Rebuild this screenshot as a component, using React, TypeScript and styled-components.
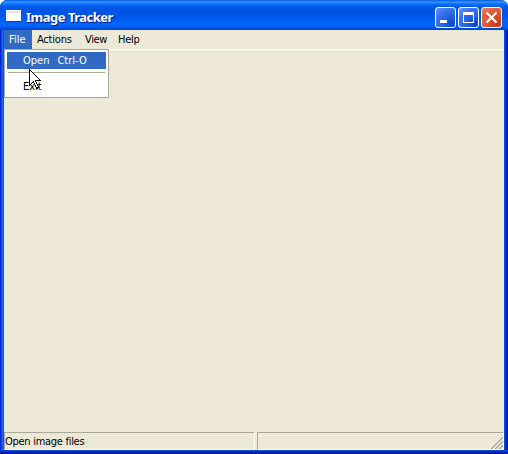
import React from 'react';
import styled, { createGlobalStyle } from 'styled-components';

const Global = createGlobalStyle`
  * { box-sizing: border-box; }
  body { margin: 0; background: #fff; overflow: hidden; }
`;

const Window = styled.div`
  width: 508px;
  height: 454px;
  display: flex;
  flex-direction: column;
  padding: 0 4px 4px;
  border-radius: 7px 7px 0 0;
  overflow: hidden;
  background:
    linear-gradient(to bottom, #0a46dc 0, #0a3fd0 1px, #0028bd 2px, #00138c 4px) 0 100% / 100% 4px no-repeat,
    linear-gradient(to right, #0019cf 0, #0831d9 1px, #166aee 2px, #0855dd 4px) 0 0 / 4px 100% no-repeat,
    linear-gradient(to left, #00138c 0, #001ea0 1px, #0441d8 3px, #0855dd 4px) 100% 0 / 4px 100% no-repeat,
    #0855dd;
  font: 11px/13px "DejaVu Sans Condensed", "DejaVu Sans", sans-serif;
  color: #000;
`;

const TitleBar = styled.header`
  height: 30px;
  flex: none;
  margin: 0 -4px;
  padding: 4px 6px 0 5px;
  display: flex;
  align-items: center;
  background: linear-gradient(to bottom, #0058e6 0, #3a92ff 2px, #0872ff 4px, #0058e8 7px, #0054e3 13px, #0059ee 18px, #0066ff 24px, #0064fa 26px, #0054e0 28px, #0040c8 30px);
`;

const AppIcon = styled.svg`
  width: 17px;
  height: 14px;
  flex: none;
  margin-top: -2px;
`;

const Title = styled.h1<{ $spacing: number }>`
  margin: 0 auto 0 4px;
  font: bold 13px/18px "Noto Sans", "Open Sans", sans-serif;
  letter-spacing: ${p => p.$spacing}px;
  color: #fff;
  text-shadow: 1px 1px 0 #0a1883;
  white-space: nowrap;
`;

const Controls = styled.div`
  display: flex;
  gap: 2px;
`;

const ControlButton = styled.button<{ $close?: boolean }>`
  width: 21px;
  height: 21px;
  padding: 0;
  border: 1px solid #fff;
  border-radius: 3px;
  background: ${p => p.$close
    ? 'radial-gradient(circle at 85% 85%, #c23c1a 0, #d9502f 40%, #e0623f 70%, #f0a08c 120%)'
    : 'radial-gradient(circle at 85% 85%, #0648cc 0, #2663e2 40%, #3f75ea 70%, #92b2f5 120%)'};
  svg { display: block; width: 19px; height: 19px; }
`;

const MenuBar = styled.nav`
  height: 20px;
  flex: none;
  display: flex;
  background: #ece9d8;
  border-bottom: 1px solid #fff;
`;

const MenuItem = styled.div<{ $width: number; $active?: boolean; $spacing?: number }>`
  position: relative;
  width: ${p => p.$width}px;
  height: 19px;
  padding: 3px 0 0 5px;
  letter-spacing: ${p => p.$spacing ?? 0}px;
  white-space: nowrap;
  color: ${p => (p.$active ? '#fff' : '#000')};
  background: ${p => (p.$active ? '#316ac5' : 'transparent')};
`;

const Popup = styled.div`
  position: absolute;
  left: 0;
  top: 19px;
  width: 105px;
  height: 49px;
  padding: 2px;
  border: 1px solid #aca899;
  background: #fff;
  color: #000;
  letter-spacing: 0;
`;

const PopupItem = styled.div<{ $selected?: boolean }>`
  display: flex;
  gap: 8px;
  height: 17px;
  padding: 2px 0 0 16px;
  color: ${p => (p.$selected ? '#fff' : '#000')};
  background: ${p => (p.$selected ? '#316ac5' : 'transparent')};
`;

const Label = styled.span<{ $spacing: number }>`
  letter-spacing: ${p => p.$spacing}px;
`;

const Separator = styled.hr`
  height: 1px;
  margin: 3px 1px 5px;
  border: 0;
  background: #aca899;
`;

const Cursor = styled.svg`
  position: absolute;
  left: 24px;
  top: 19px;
  width: 12px;
  height: 21px;
`;

const Client = styled.main`
  flex: 1;
  background: #ece9d8;
`;

const StatusBar = styled.footer`
  height: 18px;
  flex: none;
  display: flex;
  gap: 2px;
  background: #ece9d8;
`;

const StatusPane = styled.div<{ $width: number }>`
  width: ${p => p.$width}px;
  height: 18px;
  padding: 2px 0 0;
  border: 1px solid;
  border-color: #aca899 #fff #fff #aca899;
  display: flex;
  justify-content: space-between;
  letter-spacing: -0.28px;
`;

const Grip = styled.svg`
  width: 12px;
  height: 12px;
  margin: 2px 0 0 auto;
`;

export default function App() {
  return (
    <>
      <Global />
      <Window>
        <TitleBar>
          <AppIcon viewBox="0 0 17 14" shapeRendering="crispEdges">
            <rect x="1" y="1" width="15" height="11" fill="#fff" />
            <rect x="2" y="2" width="13" height="2" fill="#dce8ff" />
            <path d="M1 12.5H16" stroke="#073fb5" />
          </AppIcon>
          <Title $spacing={-0.5}>Image Tracker</Title>
          <Controls>
            <ControlButton aria-label="Minimize">
              <svg viewBox="0 0 19 19"><path d="M4 12h7v3H4z" fill="#fff" /></svg>
            </ControlButton>
            <ControlButton aria-label="Maximize">
              <svg viewBox="0 0 19 19"><path fillRule="evenodd" d="M4 4h11v11H4zM5 7h9v7H5z" fill="#fff" /></svg>
            </ControlButton>
            <ControlButton $close aria-label="Close">
              <svg viewBox="0 0 19 19"><path d="M4.5 4.5l10 10M14.5 4.5l-10 10" stroke="#fff" strokeWidth="2.2" /></svg>
            </ControlButton>
          </Controls>
        </TitleBar>
        <MenuBar>
          <MenuItem $width={28} $active>
            File
            <Popup>
              <PopupItem $selected>
                <Label $spacing={0}>Open</Label>
                <Label $spacing={0}>Ctrl-O</Label>
              </PopupItem>
              <Separator />
              <PopupItem>
                <Label $spacing={0}>Exit</Label>
              </PopupItem>
              <Cursor viewBox="0 0 12 21" shapeRendering="crispEdges">
                <path d="M.5 .5V16.5L4.5 12.5L7.5 19.5L9.5 18.5L6.5 11.5H11.5Z" fill="#fff" stroke="#000" />
              </Cursor>
            </Popup>
          </MenuItem>
          <MenuItem $width={48} $spacing={-0.2}>Actions</MenuItem>
          <MenuItem $width={33} $spacing={-0.4}>View</MenuItem>
          <MenuItem $width={33} $spacing={-0.3}>Help</MenuItem>
        </MenuBar>
        <Client />
        <StatusBar>
          <StatusPane $width={251}>Open image files</StatusPane>
          <StatusPane $width={247}>
            <Grip viewBox="0 0 12 12">
              <path d="M0 12L12 0M4 12L12 4M8 12L12 8" stroke="#aca899" strokeWidth="1.7" />
              <path d="M-1.5 12L12 -1.5M2.5 12L12 2.5M6.5 12L12 6.5" stroke="#fff" strokeWidth=".8" />
            </Grip>
          </StatusPane>
        </StatusBar>
      </Window>
    </>
  );
}
